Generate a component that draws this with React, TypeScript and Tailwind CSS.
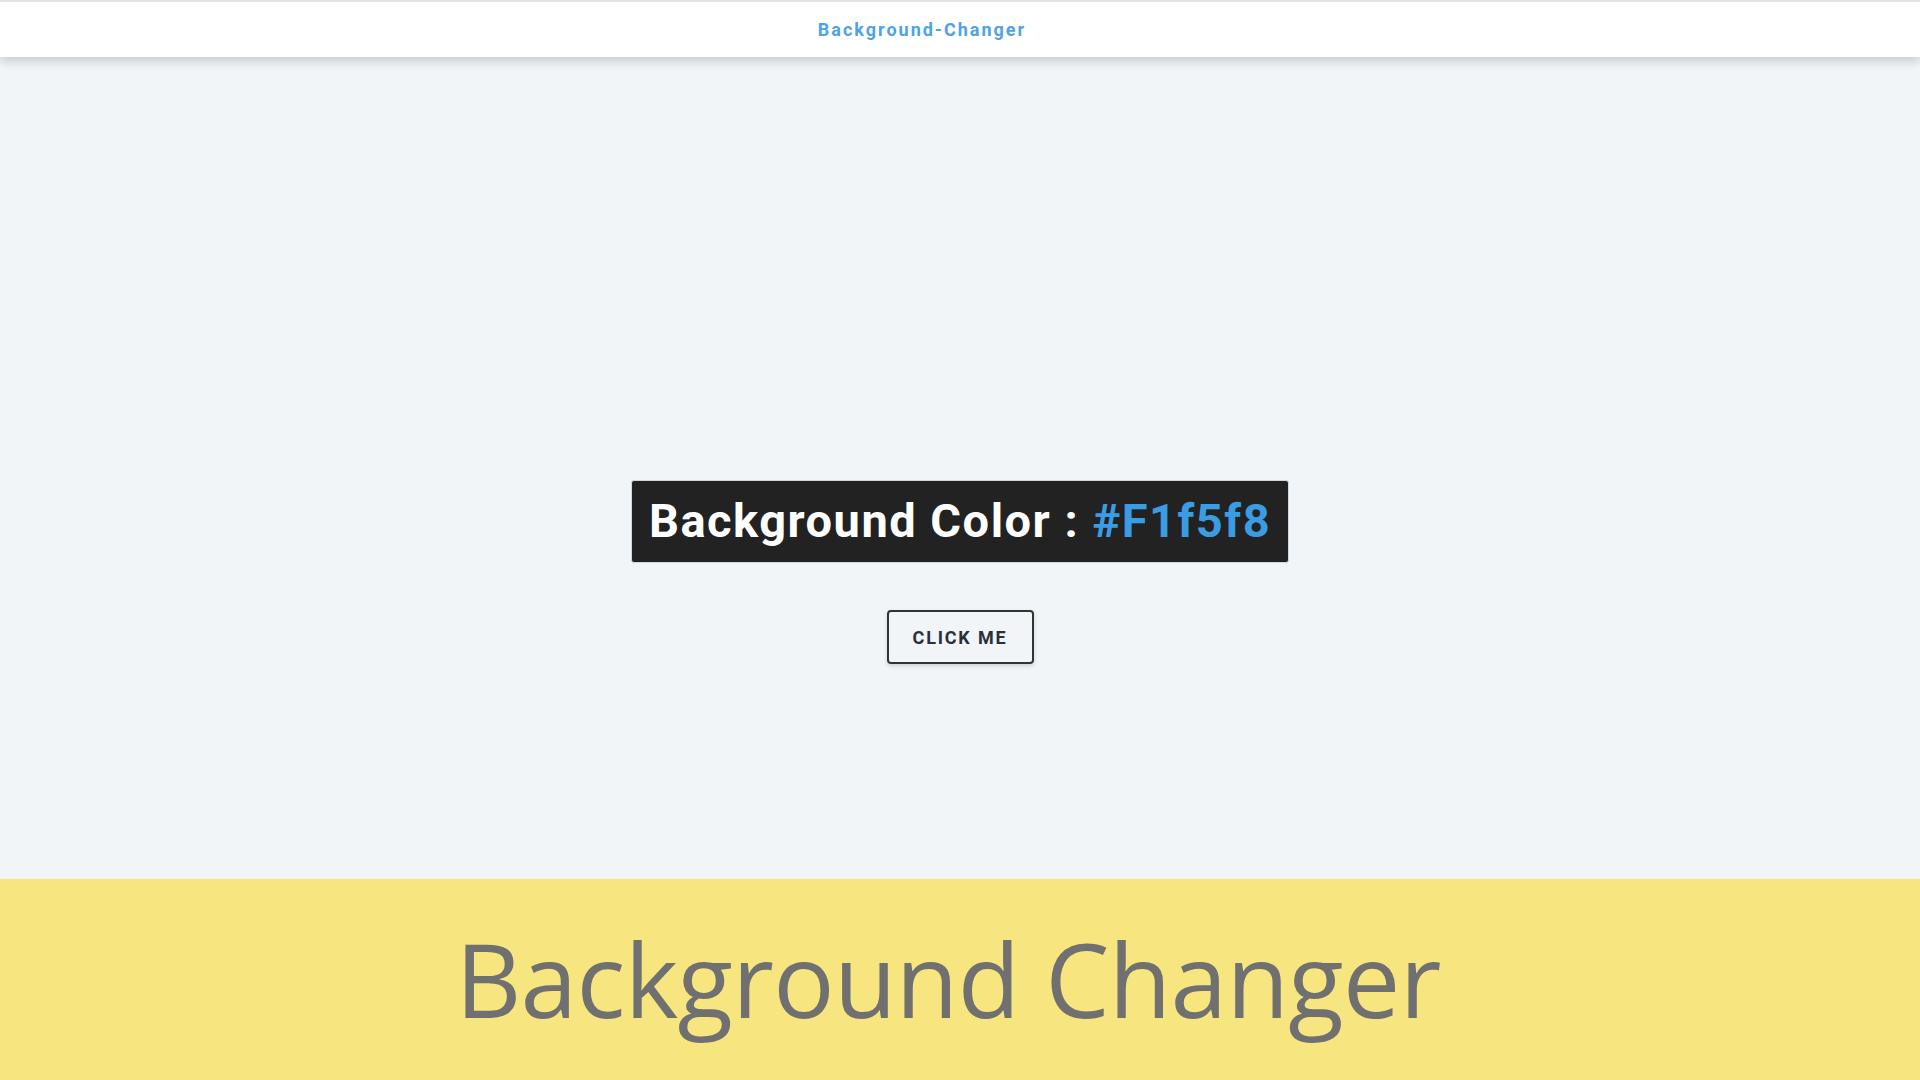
import { useState } from "react";

const colors = ["#F1f5f8", "#Fde68a", "#Bfdbfe", "#Fecaca", "#Bbf7d0"];

export default function App() {
  const [idx, setIdx] = useState(0);
  const color = colors[idx];

  return (
    <div className="min-h-screen bg-[#f1f5f8] font-['Roboto',sans-serif]" style={{ backgroundColor: color }}>
      <header className="relative z-10 h-[57px] bg-white border-t-2 border-[#e3e3e3] shadow-[0_4px_10px_rgba(0,0,0,0.18)] flex items-center justify-center">
        <h1 className="mr-[76px] mt-[-1px] text-[18px] font-bold tracking-[2px] text-[#4da3e6]">Background-Changer</h1>
      </header>

      <main className="h-[822px] flex flex-col items-center pt-[423px]">
        <div className="h-[83px] px-[17px] flex items-center bg-[#222222] rounded-[3px] border border-[#cfd6dc]">
          <h2 className="text-[47px] font-bold text-white tracking-[1.5px]">
            Background Color : <span className="text-[#3a9ce3]">{color}</span>
          </h2>
        </div>
        <button
          onClick={() => setIdx((i) => (i + 1) % colors.length)}
          className="mt-[47px] w-[147px] h-[54px] border-2 border-[#333] rounded-[4px] shadow-[0_2px_4px_rgba(0,0,0,0.15)] text-[18px] font-bold tracking-[1.8px] text-[#2a2f3a]"
        >
          CLICK ME
        </button>
      </main>

      <footer className="h-[201px] bg-[#f7e67f] flex items-center justify-center">
        <p className="mr-[24px] mt-[-2px] text-[102px] font-['Open_Sans',sans-serif] text-[#707070] tracking-[-0.7px]">Background Changer</p>
      </footer>
    </div>
  );
}
